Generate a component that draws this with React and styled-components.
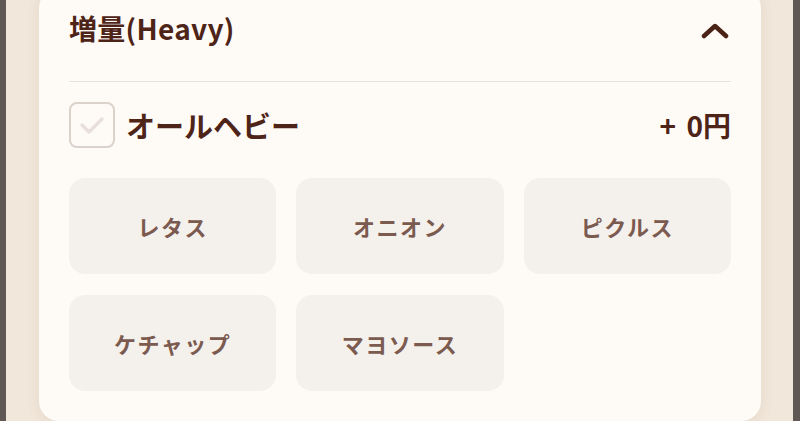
import React from 'react'
import styled, { createGlobalStyle } from 'styled-components'

const GlobalStyle = createGlobalStyle`
  html, body {
    margin: 0;
    padding: 0;
    height: 100%;
    overflow: hidden;
  }
  body {
    background: #5f5855;
    font-family: "Noto Sans CJK JP", "Noto Sans", sans-serif;
  }
`

const Frame = styled.div`
  margin: 0 7px 0 6px;
  height: 421px;
  background: #f1e7da;
  padding: 0 32px 0 33px;
  box-sizing: border-box;
  overflow: hidden;
`

const Card = styled.section`
  margin-top: -12px;
  background: #fefbf6;
  border-radius: 20px;
  box-shadow: 0 2px 14px rgba(140, 110, 80, 0.12);
  padding: 23px 30px 30px;
`

const Header = styled.div`
  display: flex;
  align-items: center;
  justify-content: space-between;
  height: 34px;
  padding-bottom: 36px;
  border-bottom: 1.5px solid #e6e1dc;
`

const Title = styled.h2`
  margin: 0;
  font-size: 28px;
  font-weight: 700;
  color: #4e2418;
  letter-spacing: 0.3px;
`

const Toggle = styled.button`
  border: 0;
  background: none;
  padding: 0;
  margin: 6px 2px 0 0;
  display: flex;
  color: #4a2316;
`

const OptionRow = styled.label`
  display: flex;
  align-items: center;
  margin-top: 20px;
  height: 46px;
`

const Box = styled.span`
  width: 42px;
  height: 42px;
  border: 2px solid #dbd2cb;
  border-radius: 8px;
  display: flex;
  align-items: center;
  justify-content: center;
  flex-shrink: 0;
`

const OptionName = styled.span`
  margin-left: 11px;
  font-size: 29px;
  font-weight: 700;
  color: #4e2418;
  flex: 1;
`

const Price = styled.span`
  font-size: 28px;
  font-weight: 700;
  color: #4e2418;
  word-spacing: 4px;
`

const Grid = styled.div`
  display: grid;
  grid-template-columns: repeat(3, 1fr);
  column-gap: 20px;
  row-gap: 21px;
  margin-top: 30px;
`

const Chip = styled.button`
  height: 96px;
  border: 0;
  border-radius: 16px;
  background: #f4f0ec;
  color: #7b5a4f;
  font-family: inherit;
  font-size: 22px;
  font-weight: 700;
  letter-spacing: 1.5px;
`

const toppings = ['レタス', 'オニオン', 'ピクルス', 'ケチャップ', 'マヨソース']

export default function App() {
  return (
    <>
      <GlobalStyle />
      <Frame>
        <Card>
          <Header>
            <Title>増量(Heavy)</Title>
            <Toggle aria-label="閉じる">
              <svg width="28" height="20" viewBox="0 0 28 20">
                <path d="M3 15 L14 5 L25 15" fill="none" stroke="currentColor" strokeWidth="4.5" strokeLinecap="round" strokeLinejoin="round" />
              </svg>
            </Toggle>
          </Header>
          <OptionRow>
            <Box>
              <svg width="26" height="20" viewBox="0 0 26 20">
                <path d="M3 10 L10 17 L23 4" fill="none" stroke="#e8e0da" strokeWidth="3.5" strokeLinecap="round" strokeLinejoin="round" />
              </svg>
            </Box>
            <OptionName>オールヘビー</OptionName>
            <Price>+ 0円</Price>
          </OptionRow>
          <Grid>
            {toppings.map((t) => (
              <Chip key={t}>{t}</Chip>
            ))}
          </Grid>
        </Card>
      </Frame>
    </>
  )
}
